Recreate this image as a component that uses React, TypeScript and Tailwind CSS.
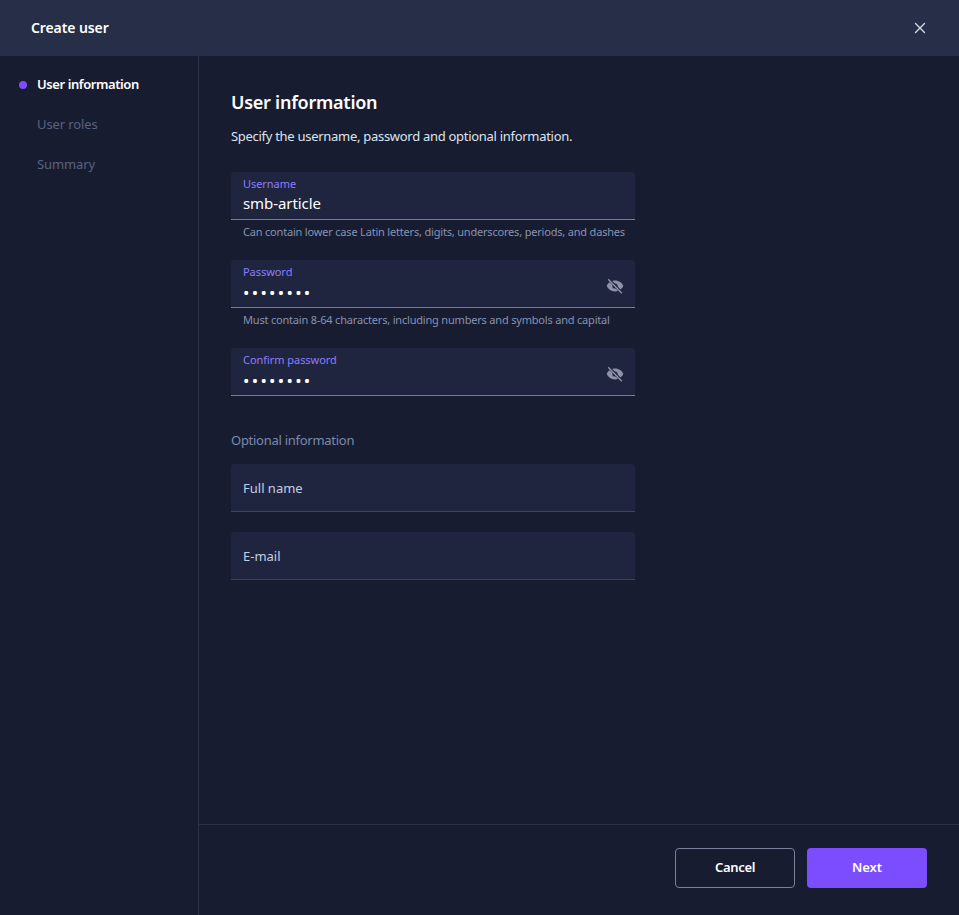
import { ReactNode } from "react";
import { X } from "lucide-react";

const font = { fontFamily: '"Noto Sans", "Open Sans", sans-serif' };

function EyeOff() {
  return (
    <svg width="18" height="18" viewBox="0 0 18 18" className="text-[#8e93a9] self-center">
      <path
        fill="currentColor"
        d="M9 3.6c-3.9 0-7 2.4-8.300 5.400C2 12 5.100 14.400 9 14.400S16 12 17.300 9C16 6 12.900 3.600 9 3.600z"
      />
      <circle cx="9" cy="9" r="2.600" fill="#20253f" />
      <path d="M2.500 2l13.500 14" stroke="#20253f" strokeWidth="2.800" />
      <path d="M2.200 2.200l13.600 14" stroke="currentColor" strokeWidth="1.400" />
    </svg>
  );
}

function Field({ label, value, helper, secret }: { label: string; value?: string; helper?: string; secret?: boolean }) {
  return (
    <div>
      <div className="h-12 flex items-start justify-between pt-[5px] pl-3 pr-[11px] bg-[#20253f] rounded-t border-b border-[#737c9f]">
        <div className="flex flex-col">
          <span className="text-[11px] leading-[14px] tracking-[-0.05px] text-[#8b7dff]">{label}</span>
          {secret ? (
            <span className="text-[17px] leading-[20px] tracking-[2.300px] text-white mt-[4px]">••••••••</span>
          ) : (
            <span className="text-[15px] leading-[20px] tracking-[-0.08px] text-white mt-[2px]">{value}</span>
          )}
        </div>
        {secret && <EyeOff />}
      </div>
      {helper && (
        <div className="pl-3 mt-[4px] text-[11px] leading-4 tracking-[-0.19px] whitespace-nowrap text-[#8793b3]">{helper}</div>
      )}
    </div>
  );
}

function EmptyField({ label }: { label: string }) {
  return (
    <div className="h-12 flex items-center pl-3 pt-[2px] bg-[#20253f] rounded-t border-b border-[#3d4364] text-[13px] text-[#c3cde6]">
      {label}
    </div>
  );
}

function Step({ active, children }: { active?: boolean; children: ReactNode }) {
  return (
    <div className="h-10 flex items-center pl-[19px] gap-[10px]">
      <span className={active ? "w-2 h-2 rounded-full bg-[#7c4dff]" : "w-2 h-2"} />
      <span className={active ? "text-[13px] font-semibold tracking-[-0.42px] text-white" : "text-[13px] tracking-[-0.1px] text-[#5a6280]"}>{children}</span>
    </div>
  );
}

export default function App() {
  return (
    <div className="w-[959px] h-[915px] flex flex-col bg-[#171c30] overflow-hidden" style={font}>
      <div className="h-14 shrink-0 flex items-center justify-between pl-[31px] pr-[30px] bg-[#262e48]">
        <span className="text-sm font-semibold tracking-[-0.1px] text-white">Create user</span>
        <X className="w-[18px] h-[18px] text-[#d5d9e6]" strokeWidth={1.800} />
      </div>
      <div className="flex-1 flex min-h-0">
        <div className="w-[199px] shrink-0 pt-[9px] border-r border-[#2b3049]">
          <Step active>User information</Step>
          <Step>User roles</Step>
          <Step>Summary</Step>
        </div>
        <div className="flex-1 flex flex-col">
          <div className="flex-1 pl-8 pt-[33px]">
            <h2 className="text-[18px] leading-[26px] font-semibold tracking-[-0.25px] text-white">User information</h2>
            <p className="mt-[11px] text-[13px] leading-[20px] tracking-[-0.29px] text-[#dfe3ee]">Specify the username, password and optional information.</p>
            <div className="w-[404px] mt-[26px]">
              <Field label="Username" value="smb-article" helper="Can contain lower case Latin letters, digits, underscores, periods, and dashes" />
              <div className="mt-[20px]">
                <Field label="Password" secret helper="Must contain 8-64 characters, including numbers and symbols and capital" />
              </div>
              <div className="mt-[20px]">
                <Field label="Confirm password" secret />
              </div>
              <div className="mt-[34px] text-[13px] leading-5 tracking-[-0.27px] text-[#7a8aad]">Optional information</div>
              <div className="mt-[14px]">
                <EmptyField label="Full name" />
              </div>
              <div className="mt-5">
                <EmptyField label="E-mail" />
              </div>
            </div>
          </div>
          <div className="h-[91px] shrink-0 flex items-start justify-end gap-3 pt-[23px] pr-8 border-t border-[#2b3049]">
            <button className="w-[120px] h-10 rounded border border-[#7b7f9c] text-[13px] font-semibold tracking-[-0.3px] text-white">Cancel</button>
            <button className="w-[120px] h-10 rounded bg-[#7c4dff] text-[13px] font-semibold tracking-[-0.1px] text-white">Next</button>
          </div>
        </div>
      </div>
    </div>
  );
}
